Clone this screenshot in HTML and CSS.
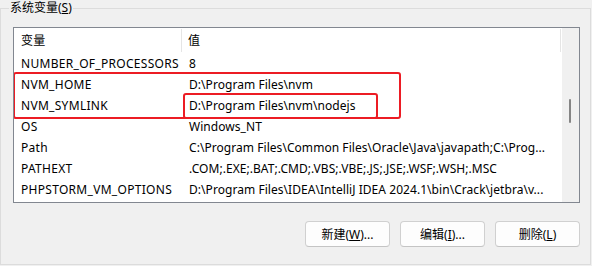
FILE: index.html
```html
<!DOCTYPE html>
<html>
<head>
<meta charset="utf-8">
<link rel="stylesheet" href="styles.css">
</head>
<body>
<div class="group">
  <div class="group-title">系统变量(<u>S</u>)</div>
  <div class="listbox">
    <div class="list">
      <div class="row header">
        <div class="c1">变量</div>
        <div class="c2">值</div>
      </div>
      <div class="row"><div class="c1">NUMBER_OF_PROCESSORS</div><div class="c2">8</div></div>
      <div class="row"><div class="c1">NVM_HOME</div><div class="c2">D:\Program Files\nvm</div></div>
      <div class="row"><div class="c1">NVM_SYMLINK</div><div class="c2">D:\Program Files\nvm\nodejs</div></div>
      <div class="row"><div class="c1">OS</div><div class="c2">Windows_NT</div></div>
      <div class="row"><div class="c1">Path</div><div class="c2">C:\Program Files\Common Files\Oracle\Java\javapath;C:\Prog...</div></div>
      <div class="row"><div class="c1">PATHEXT</div><div class="c2">.COM;.EXE;.BAT;.CMD;.VBS;.VBE;.JS;.JSE;.WSF;.WSH;.MSC</div></div>
      <div class="row"><div class="c1">PHPSTORM_VM_OPTIONS</div><div class="c2">D:\Program Files\IDEA\IntelliJ IDEA 2024.1\bin\Crack\jetbra\v...</div></div>
    </div>
    <div class="scrollbar"><div class="thumb"></div></div>
    <div class="mark mark-rows"></div>
    <div class="mark mark-value"></div>
  </div>
  <div class="buttons">
    <button class="btn">新建(<u>W</u>)...</button>
    <button class="btn">编辑(<u>I</u>)...</button>
    <button class="btn">删除(<u>L</u>)</button>
  </div>
</div>
</body>
</html>
```
FILE: styles.css
```css
html, body {
  margin: 0;
  padding: 0;
}
body {
  width: 592px;
  height: 266px;
  background: #f0f0f0;
  font-family: "Noto Sans", "Noto Sans CJK SC", sans-serif;
  font-size: 12px;
  color: #000;
  overflow: hidden;
}
.group {
  position: relative;
  margin-top: 8px;
  width: 589px;
  height: 255px;
  border: 1px solid #dcdcdc;
  display: flex;
  flex-direction: column;
}
.group-title {
  position: absolute;
  top: -9px;
  left: 8px;
  padding: 0 1px;
  line-height: 16px;
  background: #f0f0f0;
}
u {
  text-decoration-thickness: 1px;
  text-underline-offset: 1px;
}
.listbox {
  position: relative;
  margin: 18px 10px 0 12px;
  height: 174px;
  border: 1px solid #828790;
  background: #fff;
  display: flex;
  overflow: hidden;
}
.list {
  flex: 1;
  display: flex;
  flex-direction: column;
}
.row {
  display: flex;
  height: 21px;
  align-items: center;
  white-space: nowrap;
}
.row.header {
  height: 25px;
}
.c1 {
  width: 162px;
  padding-left: 7px;
  flex: none;
  letter-spacing: 0.3px;
}
.c2 {
  padding-left: 6px;
  flex: 1;
  overflow: hidden;
  letter-spacing: 0.05px;
}
.header .c1 {
  width: 153px;
  padding-right: 7px;
  border-right: 1px solid #e5e5e5;
  height: 23px;
  line-height: 23px;
}
.header .c2 {
  height: 23px;
  line-height: 23px;
  border-right: 1px solid #e5e5e5;
  margin-right: 1px;
}
.scrollbar {
  width: 17px;
  flex: none;
  background: #f0f0f0;
  position: relative;
}
.thumb {
  position: absolute;
  left: 7px;
  top: 71px;
  width: 2px;
  height: 24px;
  border-radius: 1px;
  background: #858585;
}
.mark {
  position: absolute;
  border: 2px solid #ec1c24;
  border-radius: 3px;
  box-sizing: border-box;
}
.mark-rows {
  left: -1px;
  top: 44px;
  width: 388px;
  height: 47px;
}
.mark-value {
  left: 169px;
  top: 65px;
  width: 195px;
  height: 26px;
}
.buttons {
  display: flex;
  justify-content: flex-end;
  gap: 10px;
  margin-top: 18px;
  padding-right: 10px;
}
.btn {
  width: 85px;
  height: 26px;
  background: #fdfdfd;
  border: 1px solid #d0d0d0;
  border-bottom-color: #c4c4c4;
  border-radius: 4px;
  font-family: "Noto Sans", "Noto Sans CJK SC", sans-serif;
  font-size: 12px;
  color: #000;
  padding: 0;
}
```
